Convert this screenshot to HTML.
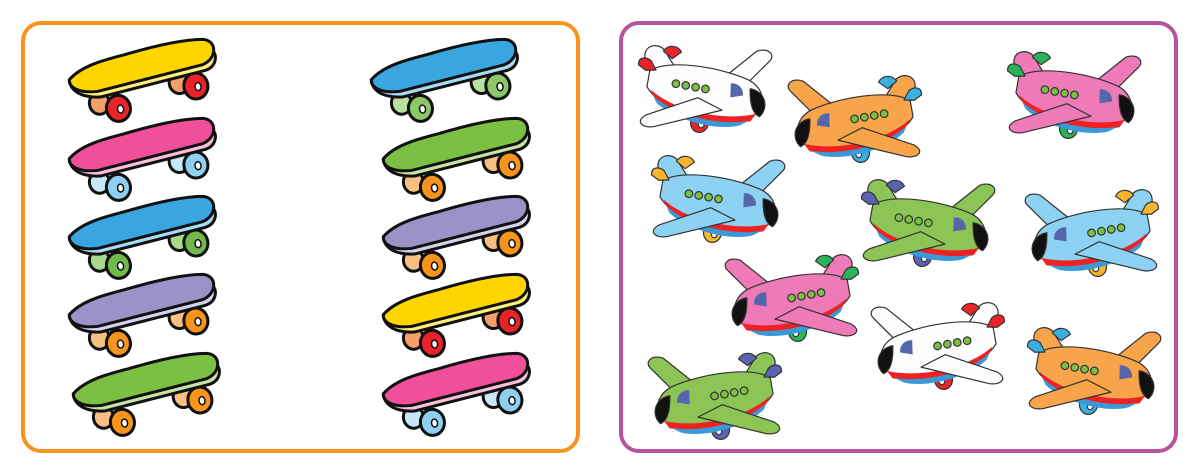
<!DOCTYPE html>
<html><head><meta charset="utf-8"><style>
html,body{margin:0;padding:0;background:#fff;width:1200px;height:475px;overflow:hidden}
</style></head><body>
<svg width="1200" height="475" viewBox="0 0 1200 475" xmlns="http://www.w3.org/2000/svg">
<defs>
<g id="sk" stroke="#111" stroke-width="3" stroke-linejoin="round" transform="rotate(-9 78 40)">
  <ellipse cx="30" cy="58" rx="10" ry="11" fill="var(--w2)"/>
  <ellipse cx="112" cy="50" rx="10" ry="11" fill="var(--w2)"/>
  <ellipse cx="48" cy="66" rx="12" ry="13" fill="var(--w)"/>
  <ellipse cx="128" cy="56" rx="12" ry="13" fill="var(--w)"/>
  <ellipse cx="50" cy="67" rx="3" ry="4" fill="#fff" stroke-width="1.5"/>
  <ellipse cx="130" cy="57" rx="3" ry="4" fill="#fff" stroke-width="1.5"/>
  <path d="M4,30 C3,42 14,50 32,52 L140,42 C152,40 154,28 150,24 L8,34 Z" fill="var(--e)"/>
  <path d="M4,30 C2,38 12,45 30,46 L138,36 C154,32 156,14 142,11 C122,8 92,10 62,14 C42,16 18,18 4,30 Z" fill="var(--d)"/>
</g>
<g id="pl0" stroke="#333" stroke-width="1.2" stroke-linejoin="round">
  <path d="M84,40 L114,6 C124,0 134,6 128,14 L104,48 Z" fill="var(--b)"/>
  <path d="M6,34 C0,22 12,14 22,20 L38,38 L20,52 Z" fill="var(--b)"/>
  <path d="M22,22 C26,14 36,14 40,20 L32,28 Z" fill="var(--a)"/>
  <ellipse cx="70" cy="86" rx="9" ry="10" fill="var(--a)"/>
  <ellipse cx="72" cy="87" rx="3" ry="4" fill="#fff"/>
  <path d="M12,44 C28,28 84,28 112,36 C134,44 134,70 110,76 C80,86 28,80 12,60 Z" fill="var(--b)"/>
  <path d="M16,62 C40,78 90,82 124,68 L120,76 C90,88 40,84 20,68 Z" fill="#e22" stroke="none"/>
  <path d="M20,68 C44,84 90,86 118,76 L110,82 C88,92 44,88 24,74 Z" fill="#3a9ad8" stroke="none"/>
  <path d="M114,44 C130,44 136,60 128,70 C120,68 116,58 114,44 Z" fill="#111"/>
  <path d="M94,42 C102,40 108,46 108,52 L96,56 Z" fill="#5566aa" stroke="none"/>
  <g fill="var(--wn)" stroke="#333"><circle cx="40" cy="52" r="3.8"/><circle cx="50" cy="52" r="3.8"/><circle cx="60" cy="52" r="3.8"/><circle cx="70" cy="52" r="3.8"/></g>
  <path d="M64,62 L16,88 C6,96 14,102 26,98 L90,70 Z" fill="var(--b)"/>
  <path d="M0,40 C-2,32 6,30 12,34 L18,42 L8,44 Z" fill="var(--a)"/>
</g>
<g id="pl"><use href="#pl0" transform="rotate(10 65 55)"/></g>
</defs>
<rect x="23" y="23" width="555" height="428" rx="18" fill="none" stroke="#f7941d" stroke-width="4"/>
<rect x="621" y="23" width="555" height="428" rx="18" fill="none" stroke="#b5559f" stroke-width="4"/>

<g>
<use href="#sk" x="66" y="38" style="--d:#ffd500;--e:#fff07a;--w:#e8242a;--w2:#f4a06a"/>
<use href="#sk" x="66" y="117" style="--d:#f0509a;--e:#f9c0da;--w:#8fd0f0;--w2:#c8e8f8"/>
<use href="#sk" x="66" y="195" style="--d:#3aa6e0;--e:#a8daf4;--w:#72b84a;--w2:#a8d88a"/>
<use href="#sk" x="66" y="273" style="--d:#9b93c8;--e:#d6d2ec;--w:#f7941d;--w2:#f8c080"/>
<use href="#sk" x="70" y="352" style="--d:#7cc043;--e:#c6e4a8;--w:#f7941d;--w2:#f8c080"/>
<use href="#sk" x="368" y="38" style="--d:#3aa6e0;--e:#a8daf4;--w:#8cc86a;--w2:#b8e0a0"/>
<use href="#sk" x="380" y="117" style="--d:#7cc043;--e:#c6e4a8;--w:#f7941d;--w2:#f8c080"/>
<use href="#sk" x="380" y="195" style="--d:#9b93c8;--e:#d6d2ec;--w:#f7941d;--w2:#f8c080"/>
<use href="#sk" x="380" y="273" style="--d:#ffd500;--e:#fff07a;--w:#e8242a;--w2:#f4a06a"/>
<use href="#sk" x="380" y="352" style="--d:#f0509a;--e:#f9c0da;--w:#8fd0f0;--w2:#c8e8f8"/>
</g>

<g>
<use href="#pl" transform="translate(635,36)" style="--b:#fdfdfd;--a:#e8242a;--wn:#7cc043"/>
<use href="#pl" transform="translate(925,66) scale(-1,1)" style="--b:#f7a44a;--a:#3ab0e0;--wn:#7cc043"/>
<use href="#pl" transform="translate(1004,42)" style="--b:#ef7ab8;--a:#2bb35a;--wn:#7cc043"/>
<use href="#pl" transform="translate(648,146)" style="--b:#8dd2f2;--a:#f7b52c;--wn:#7cc043"/>
<use href="#pl" transform="translate(858,170)" style="--b:#8cc456;--a:#5a64b0;--wn:#7cc043"/>
<use href="#pl" transform="translate(1162,180) scale(-1,1)" style="--b:#8dd2f2;--a:#f7b52c;--wn:#7cc043"/>
<use href="#pl" transform="translate(862,245) scale(-1,1)" style="--b:#ef7ab8;--a:#2bb35a;--wn:#7cc043"/>
<use href="#pl" transform="translate(1008,293) scale(-1,1)" style="--b:#fdfdfd;--a:#e8242a;--wn:#7cc043"/>
<use href="#pl" transform="translate(785,343) scale(-1,1)" style="--b:#8cc456;--a:#5a64b0;--wn:#7cc043"/>
<use href="#pl" transform="translate(1024,318)" style="--b:#f7a44a;--a:#3ab0e0;--wn:#7cc043"/>
</g>
</svg>
</body></html>
